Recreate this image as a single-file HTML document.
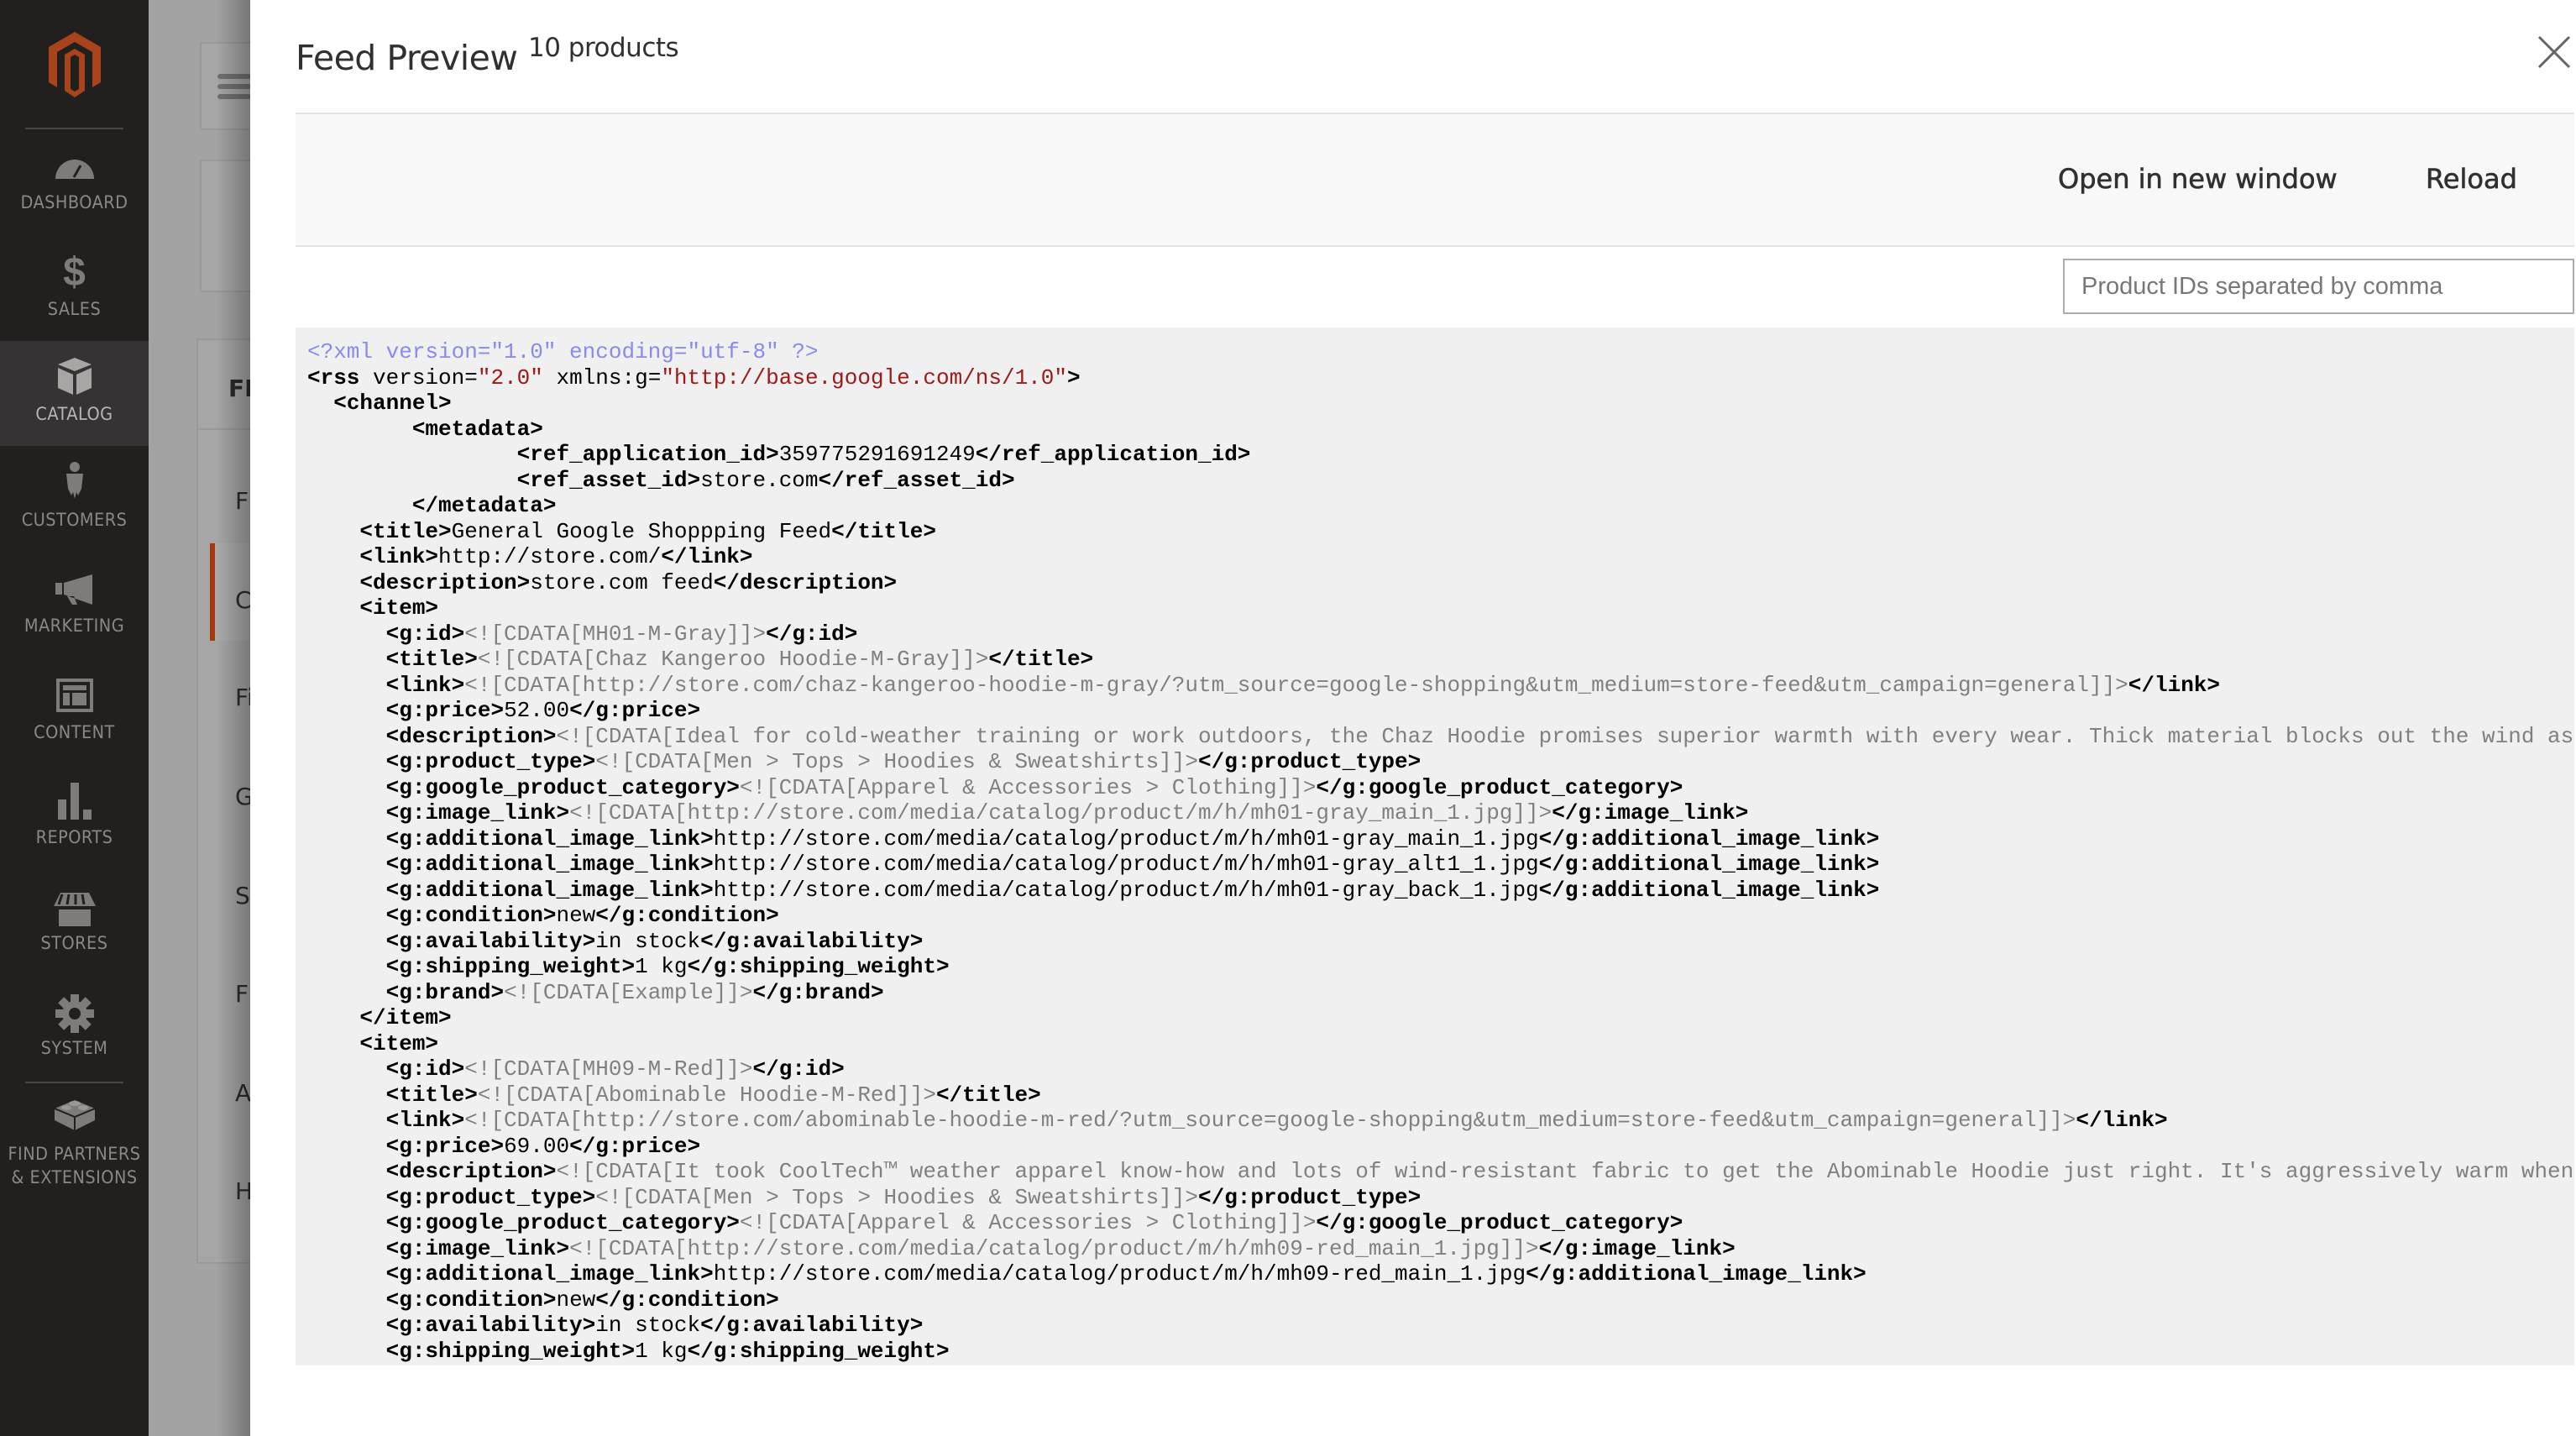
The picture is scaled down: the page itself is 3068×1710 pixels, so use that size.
<!DOCTYPE html>
<html><head><meta charset="utf-8"><style>
*{margin:0;padding:0;box-sizing:border-box}
html,body{width:3068px;height:1710px;overflow:hidden;background:#fff;font-family:"Liberation Sans",sans-serif}
.abs{position:absolute}
#side{left:0;top:0;width:177px;height:1710px;background:#221f1f}
.lbl{position:absolute;left:0;width:177px;text-align:center;color:#8a8886;font-size:21px;letter-spacing:.5px;font-family:"DejaVu Sans","Liberation Sans",sans-serif;transform:scaleX(.92)}
.ico{position:absolute;left:0;width:177px;display:flex;justify-content:center}
#page{left:177px;top:0;width:121px;height:1710px;background:#a3a3a3}
.pb{position:absolute;background:#a6a6a6;border:2px solid #999}
.pt{position:absolute;left:103px;font-family:"DejaVu Sans",sans-serif;font-size:28px;color:#2b2b2b}
#shadow{left:258px;top:0;width:40px;height:1710px;background:linear-gradient(to right,rgba(0,0,0,0),rgba(0,0,0,.28))}
#modal{left:298px;top:0;width:2770px;height:1710px;background:#fff}
.code{position:absolute;left:352px;top:390px;width:2714px;height:1236px;background:#f0f0f0;overflow:hidden}
pre{position:absolute;left:14px;top:14px;font-family:"Liberation Mono",monospace;font-size:26px;line-height:30.5px;color:#000;letter-spacing:0;white-space:pre}
pre b{font-weight:bold}
.d{color:#8a8aee}
.v{color:#a01818}
.c{color:#808080}
</style></head><body>
<div id="side" class="abs">
  <div class="ico" style="top:38px"><svg width="62" height="78" viewBox="0 0 62 78"><path d="M31 0L62 18V60L52 66V24L31 12L10 24V66L0 60V18Z M31 20L43 27V70L31 78L19 70V27Z M26 30V68L31 71L36 68V30L31 27Z" fill="#a9431b" fill-rule="evenodd"/></svg></div>
  <div class="abs" style="left:30px;top:152px;width:117px;height:2px;background:#4a4442"></div>
  <div class="ico" style="top:187px"><svg width="46" height="26" viewBox="0 0 46 26"><path d="M0 26A23 23 0 0 1 46 26Z" fill="#7e7c7a"/><path d="M22 24L30 10" stroke="#221f1f" stroke-width="3"/></svg></div>
  <div class="lbl" style="top:229px">DASHBOARD</div>
  <div class="ico" style="top:300px"><span style="color:#7e7c7a;font-size:48px;font-weight:bold;line-height:50px">$</span></div>
  <div class="lbl" style="top:356px">SALES</div>
  <div class="abs" style="left:0;top:406px;width:177px;height:125px;background:#353333"></div>
  <div class="ico" style="top:426px"><svg width="40" height="44" viewBox="0 0 40 44"><path d="M20 0L40 8L20 16L0 8Z" fill="#a8a6a4"/><path d="M0 12L18 20V44L0 36Z M22 20L40 12V36L22 44Z" fill="#a8a6a4"/></svg></div>
  <div class="lbl" style="top:481px;color:#b8b6b4">CATALOG</div>
  <div class="ico" style="top:550px"><svg width="24" height="50" viewBox="0 0 24 50"><circle cx="12" cy="6" r="6" fill="#7e7c7a"/><path d="M2 14H22L20 32L16 40L14 36L12 44L10 36L8 40L4 32Z" fill="#7e7c7a"/></svg></div>
  <div class="lbl" style="top:607px">CUSTOMERS</div>
  <div class="ico" style="top:684px"><svg width="46" height="36" viewBox="0 0 46 36"><path d="M0 10H8V24H0Z M10 10L44 0V36L10 24Z M14 26L20 36H26L22 26Z" fill="#7e7c7a"/></svg></div>
  <div class="lbl" style="top:733px">MARKETING</div>
  <div class="ico" style="top:808px"><svg width="44" height="40" viewBox="0 0 44 40"><rect x="2" y="2" width="40" height="36" fill="none" stroke="#7e7c7a" stroke-width="4"/><rect x="8" y="8" width="28" height="6" fill="#7e7c7a"/><rect x="8" y="17" width="8" height="15" fill="#7e7c7a"/><rect x="19" y="17" width="17" height="15" fill="#7e7c7a"/></svg></div>
  <div class="lbl" style="top:860px">CONTENT</div>
  <div class="ico" style="top:932px"><svg width="40" height="44" viewBox="0 0 40 44"><rect x="0" y="20" width="10" height="24" fill="#7e7c7a"/><rect x="15" y="0" width="10" height="44" fill="#7e7c7a"/><rect x="30" y="32" width="10" height="12" fill="#7e7c7a"/></svg></div>
  <div class="lbl" style="top:985px">REPORTS</div>
  <div class="ico" style="top:1063px"><svg width="50" height="40" viewBox="0 0 50 40"><path d="M8 0H42L50 16H0Z" fill="#7e7c7a"/><path d="M10 2L6 14M18 2L16 14M26 2V14M34 2L36 14" stroke="#221f1f" stroke-width="3"/><rect x="6" y="20" width="38" height="20" fill="#7e7c7a"/></svg></div>
  <div class="lbl" style="top:1111px">STORES</div>
  <div class="ico" style="top:1184px"><svg width="46" height="46" viewBox="0 0 46 46"><g fill="#7e7c7a"><circle cx="23" cy="23" r="15"/><rect x="18" y="0" width="10" height="46"/><rect x="0" y="18" width="46" height="10"/><rect x="18" y="0" width="10" height="46" transform="rotate(45 23 23)"/><rect x="18" y="0" width="10" height="46" transform="rotate(-45 23 23)"/></g><circle cx="23" cy="23" r="7" fill="#221f1f"/></svg></div>
  <div class="lbl" style="top:1236px">SYSTEM</div>
  <div class="abs" style="left:30px;top:1288px;width:117px;height:2px;background:#4a4442"></div>
  <div class="ico" style="top:1306px"><svg width="48" height="40" viewBox="0 0 48 40"><path d="M24 4L48 14V28L24 40L0 28V14Z" fill="#7e7c7a"/><path d="M0 14L24 24L48 14M24 24V40" stroke="#221f1f" stroke-width="2" fill="none"/><ellipse cx="24" cy="8" rx="7" ry="3" fill="#9a9896"/><ellipse cx="14" cy="13" rx="6" ry="3" fill="#9a9896"/><ellipse cx="34" cy="13" rx="6" ry="3" fill="#9a9896"/></svg></div>
  <div class="lbl" style="top:1362px;left:-4px;width:185px">FIND PARTNERS</div>
  <div class="lbl" style="top:1390px">&amp; EXTENSIONS</div>
</div>
<div id="page" class="abs">
  <div class="pb" style="left:61px;top:50px;width:80px;height:105px"></div>
  <div class="abs" style="left:82px;top:88px;width:40px;height:6px;background:#707070;border-radius:3px"></div>
  <div class="abs" style="left:82px;top:100px;width:40px;height:6px;background:#707070;border-radius:3px"></div>
  <div class="abs" style="left:82px;top:112px;width:40px;height:6px;background:#707070;border-radius:3px"></div>
  <div class="pb" style="left:61px;top:190px;width:80px;height:158px"></div>
  <div class="pb" style="left:57px;top:403px;width:80px;height:1102px"></div>
  <div class="abs" style="left:59px;top:510px;width:80px;height:2px;background:#999"></div>
  <div class="pt" style="top:446px;font-weight:bold;left:95px">FE</div>
  <div class="abs" style="left:73px;top:647px;width:60px;height:116px;background:#ababab"></div>
  <div class="abs" style="left:73px;top:647px;width:6px;height:116px;background:#a53a0c"></div>
  <div class="pt" style="top:580px">F</div>
  <div class="pt" style="top:698px">C</div>
  <div class="pt" style="top:814px">Fi</div>
  <div class="pt" style="top:932px">G</div>
  <div class="pt" style="top:1050px">S</div>
  <div class="pt" style="top:1167px">F</div>
  <div class="pt" style="top:1285px">A</div>
  <div class="pt" style="top:1402px">H</div>
</div>
<div id="shadow" class="abs"></div>
<div id="modal" class="abs"></div>
<div class="abs" style="left:352px;top:45px;font-family:'DejaVu Sans',sans-serif;font-size:41px;color:#303030;letter-spacing:-.5px">Feed Preview <span style="font-size:31px;position:relative;top:-16px">10 products</span></div>
<svg class="abs" style="left:3022px;top:42px" width="40" height="40" viewBox="0 0 40 40"><path d="M2 2L38 38M38 2L2 38" stroke="#666" stroke-width="3"/></svg>
<div class="abs" style="left:352px;top:134px;width:2714px;height:160px;background:#f8f8f8;border-top:2px solid #e3e3e3;border-bottom:2px solid #e3e3e3"></div>
<div class="abs" style="left:2451px;top:194px;font-family:'DejaVu Sans',sans-serif;font-size:32px;color:#303030;-webkit-text-stroke:.6px #303030">Open in new window</div>
<div class="abs" style="left:2889px;top:194px;font-family:'DejaVu Sans',sans-serif;font-size:32px;color:#303030;-webkit-text-stroke:.6px #303030">Reload</div>
<div class="abs" style="left:2457px;top:308px;width:609px;height:66px;border:2px solid #adadad;background:#fff"></div>
<div class="abs" style="left:2479px;top:325px;font-size:29px;color:#777">Product IDs separated by comma</div>
<div class="code"><pre><span class="d">&lt;?xml version="1.0" encoding="utf-8" ?&gt;</span>
<b>&lt;rss</b> version=<span class="v">"2.0"</span> xmlns:g=<span class="v">"http://base.google.com/ns/1.0"</span><b>&gt;</b>
  <b>&lt;channel&gt;</b>
        <b>&lt;metadata&gt;</b>
                <b>&lt;ref_application_id&gt;</b>359775291691249<b>&lt;/ref_application_id&gt;</b>
                <b>&lt;ref_asset_id&gt;</b>store.com<b>&lt;/ref_asset_id&gt;</b>
        <b>&lt;/metadata&gt;</b>
    <b>&lt;title&gt;</b>General Google Shoppping Feed<b>&lt;/title&gt;</b>
    <b>&lt;link&gt;</b>http://store.com/<b>&lt;/link&gt;</b>
    <b>&lt;description&gt;</b>store.com feed<b>&lt;/description&gt;</b>
    <b>&lt;item&gt;</b>
      <b>&lt;g:id&gt;</b><span class="c">&lt;![CDATA[MH01-M-Gray]]&gt;</span><b>&lt;/g:id&gt;</b>
      <b>&lt;title&gt;</b><span class="c">&lt;![CDATA[Chaz Kangeroo Hoodie-M-Gray]]&gt;</span><b>&lt;/title&gt;</b>
      <b>&lt;link&gt;</b><span class="c">&lt;![CDATA[http://store.com/chaz-kangeroo-hoodie-m-gray/?utm_source=google-shopping&amp;utm_medium=store-feed&amp;utm_campaign=general]]&gt;</span><b>&lt;/link&gt;</b>
      <b>&lt;g:price&gt;</b>52.00<b>&lt;/g:price&gt;</b>
      <b>&lt;description&gt;</b><span class="c">&lt;![CDATA[Ideal for cold-weather training or work outdoors, the Chaz Hoodie promises superior warmth with every wear. Thick material blocks out the wind as well as rain.]]&gt;</span>
      <b>&lt;g:product_type&gt;</b><span class="c">&lt;![CDATA[Men &gt; Tops &gt; Hoodies &amp; Sweatshirts]]&gt;</span><b>&lt;/g:product_type&gt;</b>
      <b>&lt;g:google_product_category&gt;</b><span class="c">&lt;![CDATA[Apparel &amp; Accessories &gt; Clothing]]&gt;</span><b>&lt;/g:google_product_category&gt;</b>
      <b>&lt;g:image_link&gt;</b><span class="c">&lt;![CDATA[http://store.com/media/catalog/product/m/h/mh01-gray_main_1.jpg]]&gt;</span><b>&lt;/g:image_link&gt;</b>
      <b>&lt;g:additional_image_link&gt;</b>http://store.com/media/catalog/product/m/h/mh01-gray_main_1.jpg<b>&lt;/g:additional_image_link&gt;</b>
      <b>&lt;g:additional_image_link&gt;</b>http://store.com/media/catalog/product/m/h/mh01-gray_alt1_1.jpg<b>&lt;/g:additional_image_link&gt;</b>
      <b>&lt;g:additional_image_link&gt;</b>http://store.com/media/catalog/product/m/h/mh01-gray_back_1.jpg<b>&lt;/g:additional_image_link&gt;</b>
      <b>&lt;g:condition&gt;</b>new<b>&lt;/g:condition&gt;</b>
      <b>&lt;g:availability&gt;</b>in stock<b>&lt;/g:availability&gt;</b>
      <b>&lt;g:shipping_weight&gt;</b>1 kg<b>&lt;/g:shipping_weight&gt;</b>
      <b>&lt;g:brand&gt;</b><span class="c">&lt;![CDATA[Example]]&gt;</span><b>&lt;/g:brand&gt;</b>
    <b>&lt;/item&gt;</b>
    <b>&lt;item&gt;</b>
      <b>&lt;g:id&gt;</b><span class="c">&lt;![CDATA[MH09-M-Red]]&gt;</span><b>&lt;/g:id&gt;</b>
      <b>&lt;title&gt;</b><span class="c">&lt;![CDATA[Abominable Hoodie-M-Red]]&gt;</span><b>&lt;/title&gt;</b>
      <b>&lt;link&gt;</b><span class="c">&lt;![CDATA[http://store.com/abominable-hoodie-m-red/?utm_source=google-shopping&amp;utm_medium=store-feed&amp;utm_campaign=general]]&gt;</span><b>&lt;/link&gt;</b>
      <b>&lt;g:price&gt;</b>69.00<b>&lt;/g:price&gt;</b>
      <b>&lt;description&gt;</b><span class="c">&lt;![CDATA[It took CoolTech™ weather apparel know-how and lots of wind-resistant fabric to get the Abominable Hoodie just right. It's aggressively warm when it needs to be.]]&gt;</span>
      <b>&lt;g:product_type&gt;</b><span class="c">&lt;![CDATA[Men &gt; Tops &gt; Hoodies &amp; Sweatshirts]]&gt;</span><b>&lt;/g:product_type&gt;</b>
      <b>&lt;g:google_product_category&gt;</b><span class="c">&lt;![CDATA[Apparel &amp; Accessories &gt; Clothing]]&gt;</span><b>&lt;/g:google_product_category&gt;</b>
      <b>&lt;g:image_link&gt;</b><span class="c">&lt;![CDATA[http://store.com/media/catalog/product/m/h/mh09-red_main_1.jpg]]&gt;</span><b>&lt;/g:image_link&gt;</b>
      <b>&lt;g:additional_image_link&gt;</b>http://store.com/media/catalog/product/m/h/mh09-red_main_1.jpg<b>&lt;/g:additional_image_link&gt;</b>
      <b>&lt;g:condition&gt;</b>new<b>&lt;/g:condition&gt;</b>
      <b>&lt;g:availability&gt;</b>in stock<b>&lt;/g:availability&gt;</b>
      <b>&lt;g:shipping_weight&gt;</b>1 kg<b>&lt;/g:shipping_weight&gt;</b>
</pre></div>
</body></html>
